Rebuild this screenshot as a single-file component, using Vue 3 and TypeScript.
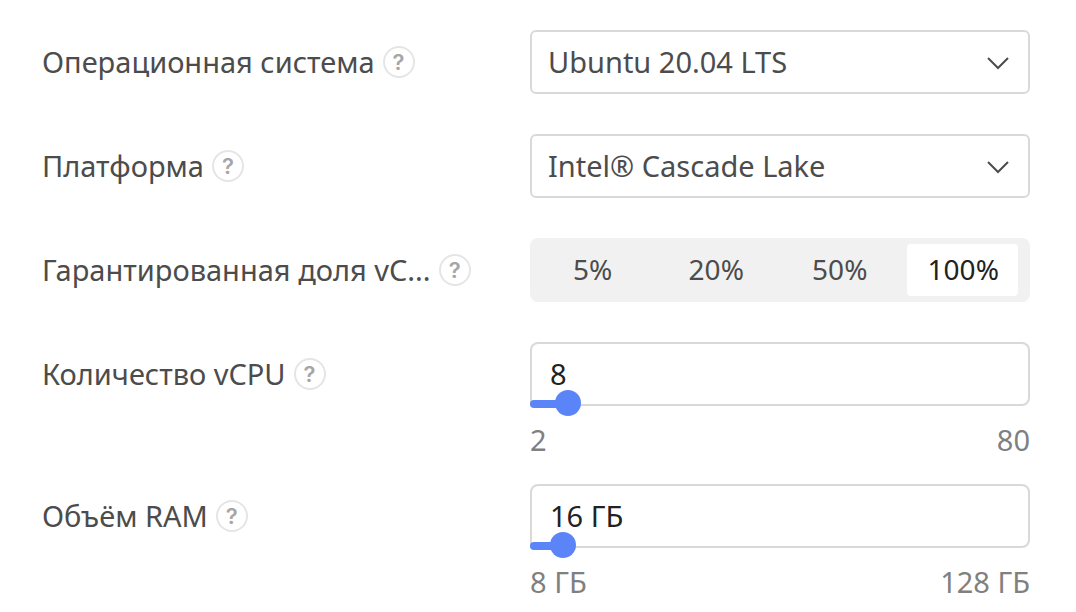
<script setup lang="ts">
import { reactive, ref } from 'vue'

interface SelectField {
  id: string
  label: string
  value: string
  options: string[]
}

interface RangeField {
  id: string
  label: string
  value: number
  min: number
  max: number
  step: number
  unit: string
}

const selects = reactive<SelectField[]>([
  { id: 'os', label: 'Операционная система', value: 'Ubuntu 20.04 LTS', options: ['Ubuntu 20.04 LTS'] },
  { id: 'platform', label: 'Платформа', value: 'Intel® Cascade Lake', options: ['Intel® Cascade Lake'] },
])

const shares = ['5%', '20%', '50%', '100%']
const share = ref('100%')

const ranges = reactive<RangeField[]>([
  { id: 'cpu', label: 'Количество vCPU', value: 8, min: 2, max: 80, step: 2, unit: '' },
  { id: 'ram', label: 'Объём RAM', value: 16, min: 8, max: 128, step: 8, unit: ' ГБ' },
])

const fill = (f: RangeField): string => `${((f.value - f.min) / (f.max - f.min)) * 100}%`

function commit(f: RangeField, event: Event): void {
  const input = event.target as HTMLInputElement
  const parsed = parseInt(input.value, 10)
  if (!Number.isNaN(parsed)) f.value = Math.min(f.max, Math.max(f.min, parsed))
  input.value = `${f.value}${f.unit}`
}
</script>

<template>
  <form class="form" @submit.prevent>
    <div v-for="f in selects" :key="f.id" class="row">
      <div class="caption">
        <label class="label" :for="f.id">{{ f.label }}</label>
        <button type="button" class="help">?</button>
      </div>
      <div class="control">
        <select :id="f.id" v-model="f.value" class="box select">
          <option v-for="o in f.options" :key="o">{{ o }}</option>
        </select>
        <svg class="chevron" viewBox="0 0 24 14" aria-hidden="true">
          <path d="M2 2 L12 12 L22 2" />
        </svg>
      </div>
    </div>

    <div class="row">
      <div class="caption">
        <span id="share" class="label">Гарантированная доля vC...</span>
        <button type="button" class="help">?</button>
      </div>
      <div class="segments" role="group" aria-labelledby="share">
        <button
          v-for="s in shares"
          :key="s"
          type="button"
          class="segment"
          :class="{ active: s === share }"
          :aria-pressed="s === share"
          @click="share = s"
        >{{ s }}</button>
      </div>
    </div>

    <div v-for="f in ranges" :key="f.id" class="row ranged">
      <div class="caption">
        <label class="label" :for="f.id">{{ f.label }}</label>
        <button type="button" class="help">?</button>
      </div>
      <div>
        <div class="control">
          <input :id="f.id" class="box number" type="text" :value="`${f.value}${f.unit}`" @change="commit(f, $event)">
          <span class="fill" :style="{ width: fill(f) }"></span>
          <input
            v-model.number="f.value"
            class="slider"
            type="range"
            :min="f.min"
            :max="f.max"
            :step="f.step"
            :aria-label="f.label"
          >
        </div>
        <div class="limits">
          <span>{{ f.min }}{{ f.unit }}</span>
          <span>{{ f.max }}{{ f.unit }}</span>
        </div>
      </div>
    </div>
  </form>
</template>

<style>
body {
  margin: 0;
  background: #fff;
}
</style>

<style scoped>
.form {
  padding: 30px 46px 0 42px;
  color: #4c4c4c;
  font-family: "Noto Sans", "Open Sans", sans-serif;
  font-size: 29px;
}

.form * {
  box-sizing: border-box;
}

.row {
  display: grid;
  grid-template-columns: minmax(0, 432fr) minmax(0, 500fr);
  column-gap: 56px;
  align-items: start;
  margin-bottom: 40px;
}

.ranged {
  margin-bottom: 24px;
}

.ranged:last-child {
  margin-bottom: 0;
}

.caption {
  display: flex;
  align-items: center;
  gap: 8px;
  height: 64px;
}

.label {
  padding-bottom: 2px;
  white-space: nowrap;
}

button,
input,
select {
  margin: 0;
  border: 0;
  color: inherit;
  font: inherit;
}

.help {
  flex: none;
  width: 32px;
  height: 32px;
  padding: 0;
  border: 2px solid #e5e5e5;
  border-radius: 50%;
  background: none;
  color: #a6a6a6;
  font-family: Inter, "Liberation Sans", sans-serif;
  font-size: 22px;
  font-weight: 600;
  line-height: 28px;
}

.control {
  position: relative;
}

.box {
  display: block;
  width: 100%;
  height: 64px;
  border: 2px solid #d9d9d9;
  border-radius: 6px;
  background: #fff;
}

.select {
  padding: 0 60px 2px 16px;
  appearance: none;
}

.chevron {
  position: absolute;
  top: 26px;
  right: 20px;
  width: 24px;
  height: 14px;
  fill: none;
  stroke: #4c4c4c;
  stroke-width: 2;
  pointer-events: none;
}

.segments {
  display: grid;
  grid-template-columns: repeat(4, 1fr);
  gap: 12px;
  height: 64px;
  padding: 6px 12px 6px 6px;
  border-radius: 8px;
  background: #f1f1f1;
}

.segment {
  padding: 0 0 2px 2px;
  border-radius: 4px;
  background: none;
  font-size: 28px;
}

.active {
  background: #fff;
  color: #222;
}

.number {
  padding: 0 18px 2px;
  border-radius: 8px 8px 8px 0;
  color: #222;
}

.fill {
  position: absolute;
  bottom: -2px;
  left: 0;
  height: 8px;
  border-radius: 4px 0 0 4px;
  background: #5a84f8;
}

.slider {
  position: absolute;
  bottom: -10px;
  left: -13px;
  width: calc(100% + 26px);
  height: 26px;
  background: none;
  appearance: none;
  pointer-events: none;
}

.slider::-webkit-slider-thumb {
  width: 26px;
  height: 26px;
  border: 0;
  border-radius: 50%;
  background: #5a84f8;
  appearance: none;
  pointer-events: auto;
}

.limits {
  display: flex;
  justify-content: space-between;
  padding-top: 14px;
  color: #808080;
  line-height: 40px;
}
</style>
